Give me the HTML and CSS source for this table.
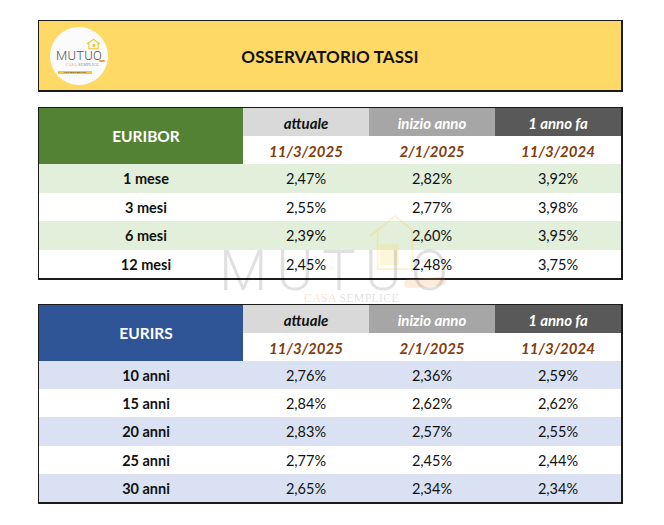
FILE: index.html
```html
<!DOCTYPE html>
<html lang="it">
<head>
<meta charset="utf-8">
<title>Osservatorio Tassi</title>
<link rel="stylesheet" href="styles.css">
</head>
<body>
<div class="page">
  <header class="banner">
    <div class="logo">
      <div class="logo-mark">
        <svg class="logo-house" viewBox="0 0 16 12" aria-hidden="true">
          <polyline points="1,6 8,1 15,6" fill="none" stroke="#f2c12e" stroke-width="1.1"/>
          <polyline points="3,5 3,11 13,11 13,5" fill="none" stroke="#f2c12e" stroke-width="1.1"/>
          <rect x="7" y="6" width="3" height="3" fill="#f2c12e"/>
        </svg>
        <span class="logo-word">MUTUO</span>
        <span class="logo-swoosh"></span>
      </div>
      <span class="logo-sub"><span class="casa">CASA</span> SEMPLICE</span>
      <span class="logo-tag">Fallo Bene Davvero</span>
    </div>
    <h1 class="title">OSSERVATORIO TASSI</h1>
  </header>

  <section class="rates euribor">
    <div class="name">EURIBOR</div>
    <div class="head light">attuale</div>
    <div class="head mid">inizio anno</div>
    <div class="head dark">1 anno fa</div>
    <div class="date">11/3/2025</div>
    <div class="date">2/1/2025</div>
    <div class="date">11/3/2024</div>

    <div class="row alt"><span class="label">1 mese</span><span>2,47%</span><span>2,82%</span><span>3,92%</span></div>
    <div class="row"><span class="label">3 mesi</span><span>2,55%</span><span>2,77%</span><span>3,98%</span></div>
    <div class="row alt"><span class="label">6 mesi</span><span>2,39%</span><span>2,60%</span><span>3,95%</span></div>
    <div class="row"><span class="label">12 mesi</span><span>2,45%</span><span>2,48%</span><span>3,75%</span></div>
  </section>

  <section class="rates eurirs">
    <div class="name">EURIRS</div>
    <div class="head light">attuale</div>
    <div class="head mid">inizio anno</div>
    <div class="head dark">1 anno fa</div>
    <div class="date">11/3/2025</div>
    <div class="date">2/1/2025</div>
    <div class="date">11/3/2024</div>

    <div class="row alt"><span class="label">10 anni</span><span>2,76%</span><span>2,36%</span><span>2,59%</span></div>
    <div class="row"><span class="label">15 anni</span><span>2,84%</span><span>2,62%</span><span>2,62%</span></div>
    <div class="row alt"><span class="label">20 anni</span><span>2,83%</span><span>2,57%</span><span>2,55%</span></div>
    <div class="row"><span class="label">25 anni</span><span>2,77%</span><span>2,45%</span><span>2,44%</span></div>
    <div class="row alt"><span class="label">30 anni</span><span>2,65%</span><span>2,34%</span><span>2,34%</span></div>
  </section>

  <div class="watermark" aria-hidden="true">
    <svg class="wm-house" viewBox="0 0 60 60">
      <polyline points="4,24 30,3 56,24" fill="none" stroke="rgba(245,200,60,0.22)" stroke-width="2"/>
      <polyline points="12,18 12,58 48,58 48,18" fill="none" stroke="rgba(245,200,60,0.22)" stroke-width="2"/>
      <rect x="14" y="32" width="20" height="22" fill="rgba(250,215,90,0.22)"/>
    </svg>
    <span class="wm-swoosh"></span>
    <span class="wm-word">MUTUO</span>
    <span class="wm-sub"><span class="casa">CASA</span> SEMPLICE</span>
  </div>
</div>
</body>
</html>
```

FILE: styles.css
```css
* { box-sizing: border-box; }

html, body {
  margin: 0;
  padding: 0;
  background: #ffffff;
}

body {
  font-family: Lato, "Open Sans", "Liberation Sans", sans-serif;
  color: #111;
}

.page {
  position: relative;
  width: 664px;
  height: 525px;
  padding: 20px 0 0 38px;
}

/* ---------- banner ---------- */
.banner {
  width: 585px;
  height: 72px;
  background: #ffd966;
  border-style: solid;
  border-color: #1b1b1b;
  border-width: 1px 2px 2px 1px;
  display: grid;
  grid-template-columns: 1fr auto 1fr;
  align-items: center;
}

.title {
  margin: 0;
  font-size: 17px;
  font-weight: 700;
  color: #111;
  letter-spacing: 0.1px;
  padding-top: 2px;
}

.logo {
  width: 58px;
  height: 58px;
  margin-left: 11px;
  border-radius: 50%;
  background: #fbfbfb;
  display: flex;
  flex-direction: column;
  align-items: center;
  padding-top: 19px;
}

.logo-mark {
  position: relative;
  line-height: 1;
}

.logo-word {
  font-family: Roboto, "DejaVu Sans", sans-serif;
  font-weight: 300;
  font-size: 13px;
  color: #555;
  letter-spacing: 0.2px;
}

.logo-house {
  position: absolute;
  width: 15px;
  height: 12px;
  right: 1px;
  top: -8px;
}

.logo-swoosh {
  position: absolute;
  right: -3px;
  bottom: 0;
  width: 6px;
  height: 2px;
  border-radius: 2px;
  background: #f0a04a;
}

.logo-sub {
  align-self: flex-end;
  margin-right: 9px;
  margin-top: 1px;
  font-family: "Liberation Serif", serif;
  font-size: 4px;
  line-height: 1;
  color: #888;
  letter-spacing: 0.2px;
}

.logo-sub .casa { color: #e7903f; }

.logo-tag {
  margin-top: 4px;
  margin-right: 8px;
  width: 34px;
  height: 3px;
  background: #f4c43c;
  font-size: 2.6px;
  line-height: 3px;
  color: #333;
  text-align: center;
  white-space: nowrap;
  overflow: hidden;
}

/* ---------- tables ---------- */
.rates {
  width: 585px;
  margin-top: 15px;
  border-style: solid;
  border-color: #1b1b1b;
  border-width: 1px 2px 2px 1px;
  display: grid;
  grid-template-columns: 204px 126px 126px 126px;
  grid-template-rows: 28px 28px;
  grid-auto-rows: 28.5px;
  background: #fff;
}

.eurirs {
  margin-top: 24px;
  grid-auto-rows: 28.2px;
}

.name {
  grid-row: span 2;
  display: flex;
  align-items: center;
  justify-content: center;
  padding-left: 10px;
  color: #fff;
  font-weight: 700;
  font-size: 15.5px;
}

.euribor .name { background: #548235; }
.eurirs .name { background: #2f5597; }

.head {
  display: flex;
  align-items: center;
  justify-content: center;
  font-weight: 700;
  font-style: italic;
  font-size: 15px;
  padding-top: 1px;
}

.head.light { background: #d9d9d9; color: #111; }
.head.mid { background: #a6a6a6; color: #fff; }
.head.dark { background: #595959; color: #fff; }

.date {
  display: flex;
  align-items: center;
  justify-content: center;
  font-weight: 700;
  font-style: italic;
  font-size: 15px;
  color: #843c0c;
  padding-top: 1px;
}

.row {
  grid-column: 1 / -1;
  display: grid;
  grid-template-columns: 204px 126px 126px 126px;
  align-items: center;
  font-size: 14.5px;
  padding-top: 1px;
}

.row span {
  text-align: center;
}

.row .label {
  font-weight: 700;
  font-size: 14.5px;
  padding-left: 10px;
}

.euribor .row.alt { background: #e2efda; }
.eurirs .row.alt { background: #d9e1f2; }

/* ---------- watermark ---------- */
.watermark {
  position: absolute;
  left: 219px;
  top: 212px;
  width: 240px;
  height: 95px;
  pointer-events: none;
}

.wm-word {
  position: absolute;
  left: 0;
  top: 31px;
  font-family: Roboto, "DejaVu Sans", sans-serif;
  font-weight: 300;
  font-size: 56px;
  line-height: 1;
  letter-spacing: 9px;
  color: rgba(0, 0, 0, 0.12);
}

.wm-house {
  position: absolute;
  left: 147px;
  top: 1px;
  width: 58px;
  height: 58px;
}

.wm-swoosh {
  position: absolute;
  left: 185px;
  top: 66px;
  width: 42px;
  height: 9px;
  border-radius: 6px;
  background: rgba(240, 160, 80, 0.2);
  transform: rotate(-4deg);
}

.wm-sub {
  position: absolute;
  left: 85px;
  top: 80px;
  font-family: "Liberation Serif", serif;
  font-size: 12px;
  line-height: 1;
  letter-spacing: 0.2px;
  color: rgba(0, 0, 0, 0.14);
  white-space: nowrap;
}

.wm-sub .casa { color: rgba(240, 150, 70, 0.3); }
```
